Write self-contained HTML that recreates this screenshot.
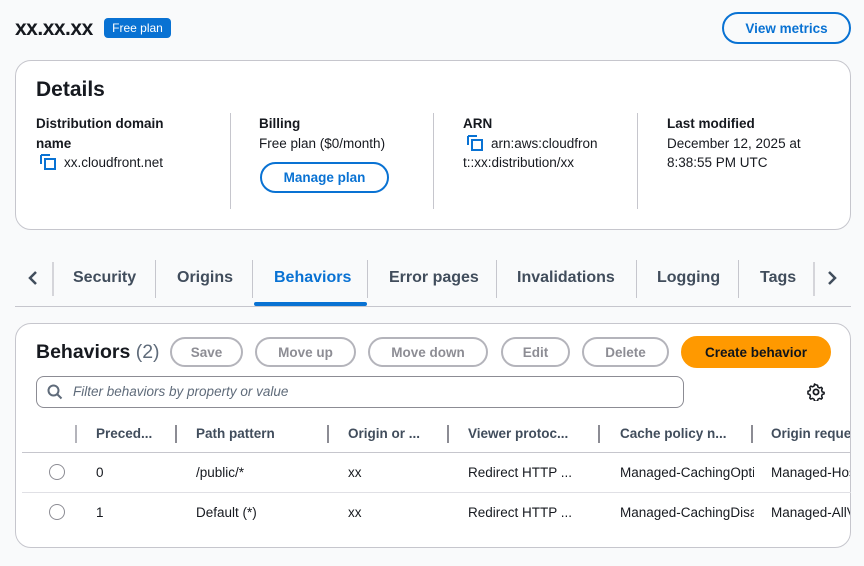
<!DOCTYPE html>
<html><head><style>
*{box-sizing:border-box;margin:0;padding:0}
body{width:864px;height:566px;background:#f9fafb;font-family:"Liberation Sans","DejaVu Sans",sans-serif;color:#16191f;position:relative;overflow:hidden;font-size:13.5px}
.a{position:absolute;white-space:nowrap}
.b{font-weight:bold}
.card{position:absolute;left:15px;width:836px;background:#fff;border:1px solid #c6c6cd;border-radius:16px}
.sep{position:absolute;width:1px;background:#c6c6cd}
.btn{position:absolute;height:30px;border:2px solid #b4b4bb;border-radius:16px;color:#8d8d94;font-weight:bold;font-size:13.5px;display:flex;align-items:center;justify-content:center;background:#fff}
.tab{position:absolute;top:269px;font-weight:bold;font-size:16px;color:#414d5c;white-space:nowrap}
.th{position:absolute;top:426px;font-weight:bold;font-size:13.5px;color:#414d5c;white-space:nowrap}
.td{position:absolute;font-size:13.5px;white-space:nowrap}
.radio{position:absolute;left:49px;width:16px;height:16px;border:1px solid #8c8c94;border-radius:50%}
</style></head><body>
<div class="a b" style="left:15px;top:17px;font-size:21px;letter-spacing:-0.5px">xx.xx.xx</div>
<div class="a" style="left:104px;top:18px;width:67px;height:20px;background:#0972d3;color:#fff;border-radius:4px;font-size:12px;line-height:20px;text-align:center">Free plan</div>
<div class="a b" style="left:722px;top:12px;width:129px;height:32px;border:2px solid #0972d3;border-radius:16px;color:#0972d3;display:flex;align-items:center;justify-content:center">View metrics</div>

<div class="card" style="top:60px;height:170px"></div>
<div class="a b" style="left:36px;top:78px;font-size:21px">Details</div>
<div class="sep" style="left:230px;top:113px;height:96px"></div>
<div class="sep" style="left:433px;top:113px;height:96px"></div>
<div class="sep" style="left:637px;top:113px;height:96px"></div>
<div class="a b" style="left:36px;top:114px;line-height:20px">Distribution domain<br>name</div>
<svg class="a" style="left:40px;top:154px" width="16" height="16"><path d="M1 1h9M1 1v9" stroke="#0972d3" stroke-width="2" fill="none"/><rect x="5" y="5" width="10" height="10" stroke="#0972d3" stroke-width="2" fill="none"/></svg>
<div class="a" style="left:64px;top:155px">xx.cloudfront.net</div>
<div class="a b" style="left:259px;top:116px">Billing</div>
<div class="a" style="left:259px;top:136px">Free plan ($0/month)</div>
<div class="a b" style="left:260px;top:162px;width:129px;height:31px;border:2px solid #0972d3;border-radius:16px;color:#0972d3;display:flex;align-items:center;justify-content:center">Manage plan</div>
<div class="a b" style="left:463px;top:116px">ARN</div>
<svg class="a" style="left:467px;top:135px" width="16" height="16"><path d="M1 1h9M1 1v9" stroke="#0972d3" stroke-width="2" fill="none"/><rect x="5" y="5" width="10" height="10" stroke="#0972d3" stroke-width="2" fill="none"/></svg>
<div class="a" style="left:491px;top:136px">arn:aws:cloudfron</div>
<div class="a" style="left:463px;top:155px">t::xx:distribution/xx</div>
<div class="a b" style="left:667px;top:116px">Last modified</div>
<div class="a" style="left:667px;top:136px">December 12, 2025 at</div>
<div class="a" style="left:667px;top:155px">8:38:55 PM UTC</div>

<svg class="a" style="left:27px;top:270px" width="12" height="16"><path d="M9 2L3 8l6 6" stroke="#414d5c" stroke-width="2.5" fill="none"/></svg>
<div class="sep" style="left:52px;top:262px;height:34px;width:2px;background:#d5d5da"></div>
<div class="tab" style="left:73px">Security</div>
<div class="sep" style="left:155px;top:260px;height:38px"></div>
<div class="tab" style="left:177px">Origins</div>
<div class="sep" style="left:252px;top:260px;height:38px"></div>
<div class="tab" style="left:274px;color:#0972d3">Behaviors</div>
<div class="sep" style="left:367px;top:260px;height:38px"></div>
<div class="tab" style="left:389px">Error pages</div>
<div class="sep" style="left:496px;top:260px;height:38px"></div>
<div class="tab" style="left:517px">Invalidations</div>
<div class="sep" style="left:636px;top:260px;height:38px"></div>
<div class="tab" style="left:657px">Logging</div>
<div class="sep" style="left:738px;top:260px;height:38px"></div>
<div class="tab" style="left:760px">Tags</div>
<div class="sep" style="left:813px;top:262px;height:34px;width:2px;background:#d5d5da"></div>
<svg class="a" style="left:826px;top:270px" width="12" height="16"><path d="M3 2l6 6-6 6" stroke="#414d5c" stroke-width="2.5" fill="none"/></svg>
<div class="a" style="left:254px;top:302px;width:113px;height:4px;background:#0972d3;border-radius:2px"></div>
<div class="a" style="left:15px;top:306px;width:836px;height:1px;background:#c6c6cd"></div>

<div class="card" style="top:323px;height:225px"></div>
<div class="a b" style="left:36px;top:341px;font-size:19.5px">Behaviors <span style="font-weight:normal;color:#5f6b7a">(2)</span></div>
<div class="btn" style="left:170px;top:337px;width:73px">Save</div>
<div class="btn" style="left:255px;top:337px;width:101px">Move up</div>
<div class="btn" style="left:368px;top:337px;width:120px">Move down</div>
<div class="btn" style="left:501px;top:337px;width:69px">Edit</div>
<div class="btn" style="left:582px;top:337px;width:87px">Delete</div>
<div class="btn" style="left:681px;top:336px;width:150px;height:32px;background:#ff9900;border-color:#ff9900;color:#0f141a">Create behavior</div>
<div class="a" style="left:36px;top:376px;width:648px;height:32px;border:1px solid #8c8c94;border-radius:8px"></div>
<svg class="a" style="left:47px;top:384px" width="16" height="16"><circle cx="6.5" cy="6.5" r="5" stroke="#5f6b7a" stroke-width="2" fill="none"/><path d="M10 10l4.5 4.5" stroke="#5f6b7a" stroke-width="2"/></svg>
<div class="a" style="left:73px;top:384px;font-style:italic;color:#5f6b7a">Filter behaviors by property or value</div>
<svg class="a" style="left:807px;top:383px" width="18" height="18" viewBox="0 0 18 18"><path d="M9 1.5l1.6.3.4 2 1.6.9 1.9-.7 1.1 1.2-.7 1.9.6 1.7 2 .6v1.6l-2 .6-.6 1.7.7 1.9-1.1 1.2-1.9-.7-1.6.9-.4 2H7.4l-.4-2-1.6-.9-1.9.7-1.1-1.2.7-1.9-.6-1.7-2-.6V8.2l2-.6.6-1.7-.7-1.9 1.1-1.2 1.9.7L7 2.6l.4-2z" stroke="#16191f" stroke-width="1.6" fill="none" stroke-linejoin="round" transform="translate(0 .2) scale(.95) translate(.5 .3)"/><circle cx="9" cy="9" r="2.6" stroke="#16191f" stroke-width="1.8" fill="none"/></svg>

<div class="sep" style="left:75px;top:425px;height:18px;width:2px;background:#b4b4bb"></div>
<div class="th" style="left:96px">Preced...</div>
<div class="sep" style="left:175px;top:425px;height:18px;width:2px;background:#8c8c94"></div>
<div class="th" style="left:196px">Path pattern</div>
<div class="sep" style="left:327px;top:425px;height:18px;width:2px;background:#8c8c94"></div>
<div class="th" style="left:348px">Origin or ...</div>
<div class="sep" style="left:447px;top:425px;height:18px;width:2px;background:#8c8c94"></div>
<div class="th" style="left:468px">Viewer protoc...</div>
<div class="sep" style="left:598px;top:425px;height:18px;width:2px;background:#8c8c94"></div>
<div class="th" style="left:620px">Cache policy n...</div>
<div class="sep" style="left:751px;top:425px;height:18px;width:2px;background:#8c8c94"></div>
<div class="th" style="left:771px;width:79px;overflow:hidden">Origin request</div>
<div class="a" style="left:22px;top:452px;width:829px;height:1px;background:#c6c6cd"></div>
<div class="radio" style="top:464px"></div>
<div class="td" style="left:96px;top:465px">0</div>
<div class="td" style="left:196px;top:465px">/public/*</div>
<div class="td" style="left:348px;top:465px">xx</div>
<div class="td" style="left:468px;top:465px">Redirect HTTP ...</div>
<div class="td" style="left:620px;top:465px;width:134px;overflow:hidden">Managed-CachingOptimized</div>
<div class="td" style="left:771px;top:465px;width:79px;overflow:hidden">Managed-HostHeader</div>
<div class="a" style="left:22px;top:492px;width:829px;height:1px;background:#e0e0e5"></div>
<div class="radio" style="top:504px"></div>
<div class="td" style="left:96px;top:505px">1</div>
<div class="td" style="left:196px;top:505px">Default (*)</div>
<div class="td" style="left:348px;top:505px">xx</div>
<div class="td" style="left:468px;top:505px">Redirect HTTP ...</div>
<div class="td" style="left:620px;top:505px;width:134px;overflow:hidden">Managed-CachingDisabled</div>
<div class="td" style="left:771px;top:505px;width:79px;overflow:hidden">Managed-AllViewer</div>
</body></html>
